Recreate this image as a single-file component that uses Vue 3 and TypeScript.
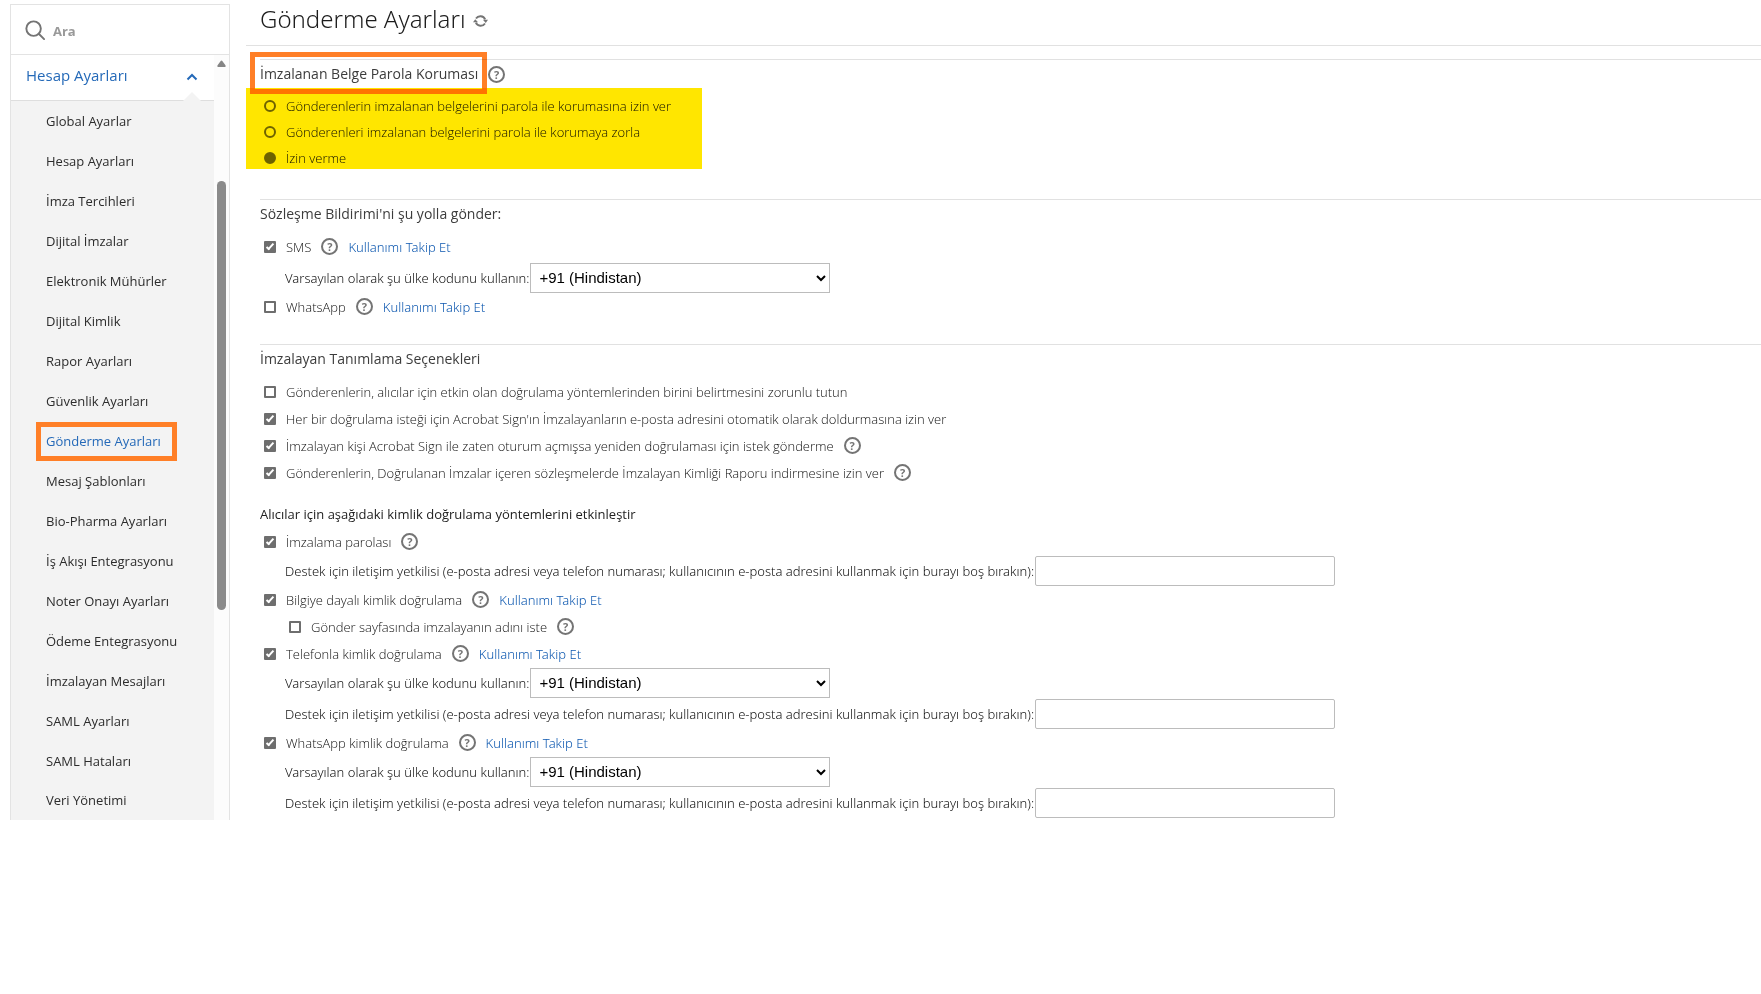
<script setup lang="ts">
import { ref } from 'vue'

interface Method {
  id: string
  label: string
  checked: boolean
  track?: boolean
  country?: boolean
  contact?: boolean
  child?: { id: string; label: string }
}

const menu = [
  'Global Ayarlar', 'Hesap Ayarları', 'İmza Tercihleri', 'Dijital İmzalar',
  'Elektronik Mühürler', 'Dijital Kimlik', 'Rapor Ayarları', 'Güvenlik Ayarları',
  'Gönderme Ayarları', 'Mesaj Şablonları', 'Bio-Pharma Ayarları',
  'İş Akışı Entegrasyonu', 'Noter Onayı Ayarları', 'Ödeme Entegrasyonu',
  'İmzalayan Mesajları', 'SAML Ayarları', 'SAML Hataları', 'Veri Yönetimi',
]
const active = 'Gönderme Ayarları'

const passwordMode = ref('deny')
const passwordModes = [
  { value: 'allow', label: 'Gönderenlerin imzalanan belgelerini parola ile korumasına izin ver' },
  { value: 'force', label: 'Gönderenleri imzalanan belgelerini parola ile korumaya zorla' },
  { value: 'deny', label: 'İzin verme' },
]

const identity = [
  { id: 'require', label: 'Gönderenlerin, alıcılar için etkin olan doğrulama yöntemlerinden birini belirtmesini zorunlu tutun', checked: false, help: false },
  { id: 'autofill', label: "Her bir doğrulama isteği için Acrobat Sign'ın İmzalayanların e-posta adresini otomatik olarak doldurmasına izin ver", checked: true, help: false },
  { id: 'skip', label: 'İmzalayan kişi Acrobat Sign ile zaten oturum açmışsa yeniden doğrulaması için istek gönderme', checked: true, help: true },
  { id: 'report', label: 'Gönderenlerin, Doğrulanan İmzalar içeren sözleşmelerde İmzalayan Kimliği Raporu indirmesine izin ver', checked: true, help: true },
]

const methods: Method[] = [
  { id: 'password', label: 'İmzalama parolası', checked: true, contact: true },
  { id: 'kba', label: 'Bilgiye dayalı kimlik doğrulama', checked: true, track: true, child: { id: 'kba-name', label: 'Gönder sayfasında imzalayanın adını iste' } },
  { id: 'phone', label: 'Telefonla kimlik doğrulama', checked: true, track: true, country: true, contact: true },
  { id: 'whatsapp-auth', label: 'WhatsApp kimlik doğrulama', checked: true, track: true, country: true, contact: true },
]

const countryLabel = 'Varsayılan olarak şu ülke kodunu kullanın:'
const contactLabel = 'Destek için iletişim yetkilisi (e-posta adresi veya telefon numarası; kullanıcının e-posta adresini kullanmak için burayı boş bırakın):'
const trackLabel = 'Kullanımı Takip Et'
</script>

<template>
  <div class="page">
    <aside class="sidebar">
      <div class="search">
        <svg viewBox="0 0 22 22" aria-hidden="true"><circle cx="9" cy="9" r="7.6" /><path d="M14.4 14.4L20 20" /></svg>
        <input type="search" placeholder="Ara" aria-label="Ara" />
      </div>
      <div class="nav-area">
        <nav>
          <button class="group" type="button" aria-expanded="true">
            <span>Hesap Ayarları</span>
            <svg viewBox="0 0 12 8" aria-hidden="true"><path d="M1.5 6.5L6 2L10.500 6.500" /></svg>
          </button>
          <ul>
            <li v-for="item in menu" :key="item">
              <a href="#" :class="{ active: item === active }">{{ item }}</a>
            </li>
          </ul>
        </nav>
        <div class="track" aria-hidden="true">
          <svg viewBox="0 0 9 7"><path d="M4.500 0.500Q5 0.500 5.500 1.200L8.600 5.500Q9 7 7.800 7H1.200Q0 7 0.400 5.500L3.500 1.200Q4 0.500 4.500 0.500Z" /></svg>
          <div class="thumb"></div>
        </div>
      </div>
    </aside>

    <main>
      <header>
        <h1>Gönderme Ayarları</h1>
        <button class="refresh" type="button" aria-label="Yenile">
          <svg viewBox="0 0 16 14" aria-hidden="true">
            <path class="arc" d="M3.200 4.400A5.600 5.600 0 0 1 13 5.200" />
            <path class="arc" d="M12.800 9.600A5.600 5.600 0 0 1 3 8.800" />
            <path class="tip" d="M10.600 5.600H16L13.600 9Z" />
            <path class="tip" d="M5.400 8.400H0L2.400 5Z" />
          </svg>
        </button>
      </header>

      <section>
        <div class="heading">
          <h2 class="framed">İmzalanan Belge Parola Koruması</h2>
          <button class="help" type="button">?</button>
        </div>
        <div class="radios" role="radiogroup">
          <div v-for="m in passwordModes" :key="m.value" class="row">
            <input :id="m.value" v-model="passwordMode" type="radio" name="password-mode" :value="m.value" />
            <label :for="m.value">{{ m.label }}</label>
          </div>
        </div>
      </section>

      <section class="notify">
        <div class="heading"><h2>Sözleşme Bildirimi'ni şu yolla gönder:</h2></div>
        <div class="options">
          <div class="row">
            <input id="sms" type="checkbox" checked />
            <label for="sms">SMS</label>
            <button class="help" type="button">?</button>
            <a href="#">{{ trackLabel }}</a>
          </div>
          <div class="field">
            <label for="sms-country">{{ countryLabel }}</label>
            <select id="sms-country"><option>+91 (Hindistan)</option></select>
          </div>
          <div class="row">
            <input id="whatsapp" type="checkbox" />
            <label for="whatsapp">WhatsApp</label>
            <button class="help" type="button">?</button>
            <a href="#">{{ trackLabel }}</a>
          </div>
        </div>
      </section>

      <section>
        <div class="heading"><h2>İmzalayan Tanımlama Seçenekleri</h2></div>
        <div class="options">
          <div v-for="o in identity" :key="o.id" class="row">
            <input :id="o.id" type="checkbox" :checked="o.checked" />
            <label :for="o.id">{{ o.label }}</label>
            <button v-if="o.help" class="help" type="button">?</button>
          </div>
        </div>
        <h3>Alıcılar için aşağıdaki kimlik doğrulama yöntemlerini etkinleştir</h3>
        <div v-for="m in methods" :key="m.id">
          <div class="row">
            <input :id="m.id" type="checkbox" :checked="m.checked" />
            <label :for="m.id">{{ m.label }}</label>
            <button class="help" type="button">?</button>
            <a v-if="m.track" href="#">{{ trackLabel }}</a>
          </div>
          <div v-if="m.child" class="row child">
            <input :id="m.child.id" type="checkbox" />
            <label :for="m.child.id">{{ m.child.label }}</label>
            <button class="help" type="button">?</button>
          </div>
          <div v-if="m.country" class="field">
            <label :for="m.id + '-country'">{{ countryLabel }}</label>
            <select :id="m.id + '-country'"><option>+91 (Hindistan)</option></select>
          </div>
          <div v-if="m.contact" class="field">
            <label :for="m.id + '-contact'">{{ contactLabel }}</label>
            <input :id="m.id + '-contact'" type="text" />
          </div>
        </div>
      </section>
    </main>
  </div>
</template>

<style>
body {
  background: #fff;
}
</style>

<style scoped>
.page {
  display: flex;
  align-items: flex-start;
  gap: 16px;
  padding: 4px 0 0 10px;
  font: 300 13px/20px "Noto Sans", sans-serif;
  color: #111;
  overflow-x: hidden;
}
.page * {
  box-sizing: border-box;
}
button {
  padding: 0;
  border: 0;
  background: none;
  font: inherit;
}
a {
  color: #0f59b0;
  text-decoration: none;
}

.sidebar {
  flex: 0 0 220px;
  border: 1px solid #e3e3e3;
  border-bottom: 0;
}
.search {
  display: flex;
  align-items: center;
  gap: 7px;
  height: 50px;
  padding: 2px 14px 0;
  border-bottom: 1px solid #e3e3e3;
}
.search svg {
  flex: none;
  width: 21px;
  height: 21px;
  fill: none;
  stroke: #747474;
  stroke-width: 2;
  stroke-linecap: round;
}
.search input {
  width: 100%;
  padding: 0;
  border: 0;
  outline: 0;
  font: 700 13px/20px "Open Sans", sans-serif;
}
.search input::placeholder {
  color: #999;
}
.nav-area {
  display: flex;
}
nav {
  flex: 1;
}
.group {
  position: relative;
  display: flex;
  align-items: center;
  justify-content: space-between;
  width: 100%;
  height: 46px;
  padding: 0 16px 6px 15px;
  border-bottom: 1px solid #dedede;
  font: 400 15px/20px "Open Sans", sans-serif;
  color: #2469b8;
}
.group::after {
  content: "";
  position: absolute;
  right: 13px;
  bottom: -1px;
  border: 9px solid transparent;
  border-top: 0;
  border-bottom-color: #f3f3f3;
}
.group svg {
  width: 12px;
  height: 8px;
  margin-top: 4px;
  fill: none;
  stroke: #2469b8;
  stroke-width: 2;
}
ul {
  margin: 0;
  padding: 0;
  list-style: none;
  background: #f3f3f3;
}
li {
  display: flex;
  align-items: center;
  height: 40px;
  padding-left: 25px;
}
li:last-child {
  height: 39px;
}
li a {
  padding: 4px 11px 5px 5px;
  border: 5px solid transparent;
  font: 400 13px/20px "Open Sans", sans-serif;
  color: #2c2c2c;
}
li a.active {
  border-color: #ff7f27;
  color: #2469b8;
}
.track {
  width: 15px;
  padding: 5px 3px 0;
  background: #fcfcfc;
}
.track svg {
  display: block;
  width: 9px;
  height: 7px;
  fill: #858585;
}
.thumb {
  height: 429px;
  margin-top: 114px;
  border-radius: 5px;
  background: #8b8b8b;
}

main {
  flex: 1;
  min-width: 0;
  padding-bottom: 24px;
  background: #fff;
}
header {
  display: flex;
  align-items: center;
  gap: 7px;
  height: 42px;
  padding: 0 0 12px 14px;
  border-bottom: 1px solid #e1e1e1;
  margin-bottom: 13px;
}
h1 {
  margin: 0;
  font: 300 24px/30px "Noto Sans", sans-serif;
  color: #1c1c1c;
}
.refresh svg {
  display: block;
  width: 15px;
  height: 14px;
  margin-top: 4px;
}
.arc {
  fill: none;
  stroke: #747474;
  stroke-width: 2;
}
.tip {
  fill: #747474;
}
section {
  margin: 0 0 24px 14px;
  border-top: 1px solid #e1e1e1;
}
.heading {
  display: flex;
  align-items: center;
  gap: 10px;
  height: 28px;
}
h2,
h3 {
  margin: 0;
  font: 400 14px/20px "Open Sans", sans-serif;
  color: #3c3c3c;
}
h3 {
  margin-top: 14px;
  font: 400 13px/28px "Open Sans", sans-serif;
  color: #222;
}
.framed {
  position: relative;
}
.framed::after {
  content: "";
  position: absolute;
  z-index: 1;
  inset: -12px -9px -10px -10px;
  border: 5px solid #ff7f27;
  mix-blend-mode: multiply;
  pointer-events: none;
}
.radios {
  position: relative;
  width: fit-content;
  padding: 5px 31px 4px 0;
}
.radios::after {
  content: "";
  position: absolute;
  inset: 0 0 6px -14px;
  background: #ffe600;
  mix-blend-mode: multiply;
  pointer-events: none;
}
.radios .row {
  height: 26px;
}
.options {
  padding-top: 5px;
}
.row {
  display: flex;
  align-items: center;
  gap: 10px;
  height: 27px;
  padding-left: 4px;
}
.row label {
  font-family: "Open Sans", sans-serif;
}
.child {
  padding-left: 29px;
}
.row input {
  appearance: none;
  position: relative;
  flex: none;
  width: 12px;
  height: 12px;
  margin: 0;
  border: 2px solid #6e6e6e;
  border-radius: 1px;
  background: #fff;
}
.row input[type="radio"] {
  border-radius: 50%;
}
.row input:checked {
  background: #6e6e6e;
}
.row input[type="checkbox"]:checked::after {
  content: "";
  position: absolute;
  left: 2px;
  top: -1px;
  width: 2px;
  height: 6px;
  border: solid #fff;
  border-width: 0 2px 2px 0;
  transform: rotate(42deg);
}
.help {
  flex: none;
  width: 17px;
  height: 17px;
  border: 2px solid #747474;
  border-radius: 50%;
  font: 700 11px/13px "Open Sans", sans-serif;
  color: #747474;
}
.field {
  display: flex;
  align-items: center;
  gap: 1px;
  padding: 1px 0 0 25px;
}
.notify .field {
  padding-top: 3px;
}
.field select,
.field input {
  width: 300px;
  height: 30px;
  border: 1px solid #bcbcbc;
  background: #fff;
  color: #000;
  font: 15px "Liberation Sans", Arial, sans-serif;
}
.field select {
  padding: 0 0 2px 4px;
  border-radius: 0;
}
.field input {
  border-radius: 2px;
}
</style>
